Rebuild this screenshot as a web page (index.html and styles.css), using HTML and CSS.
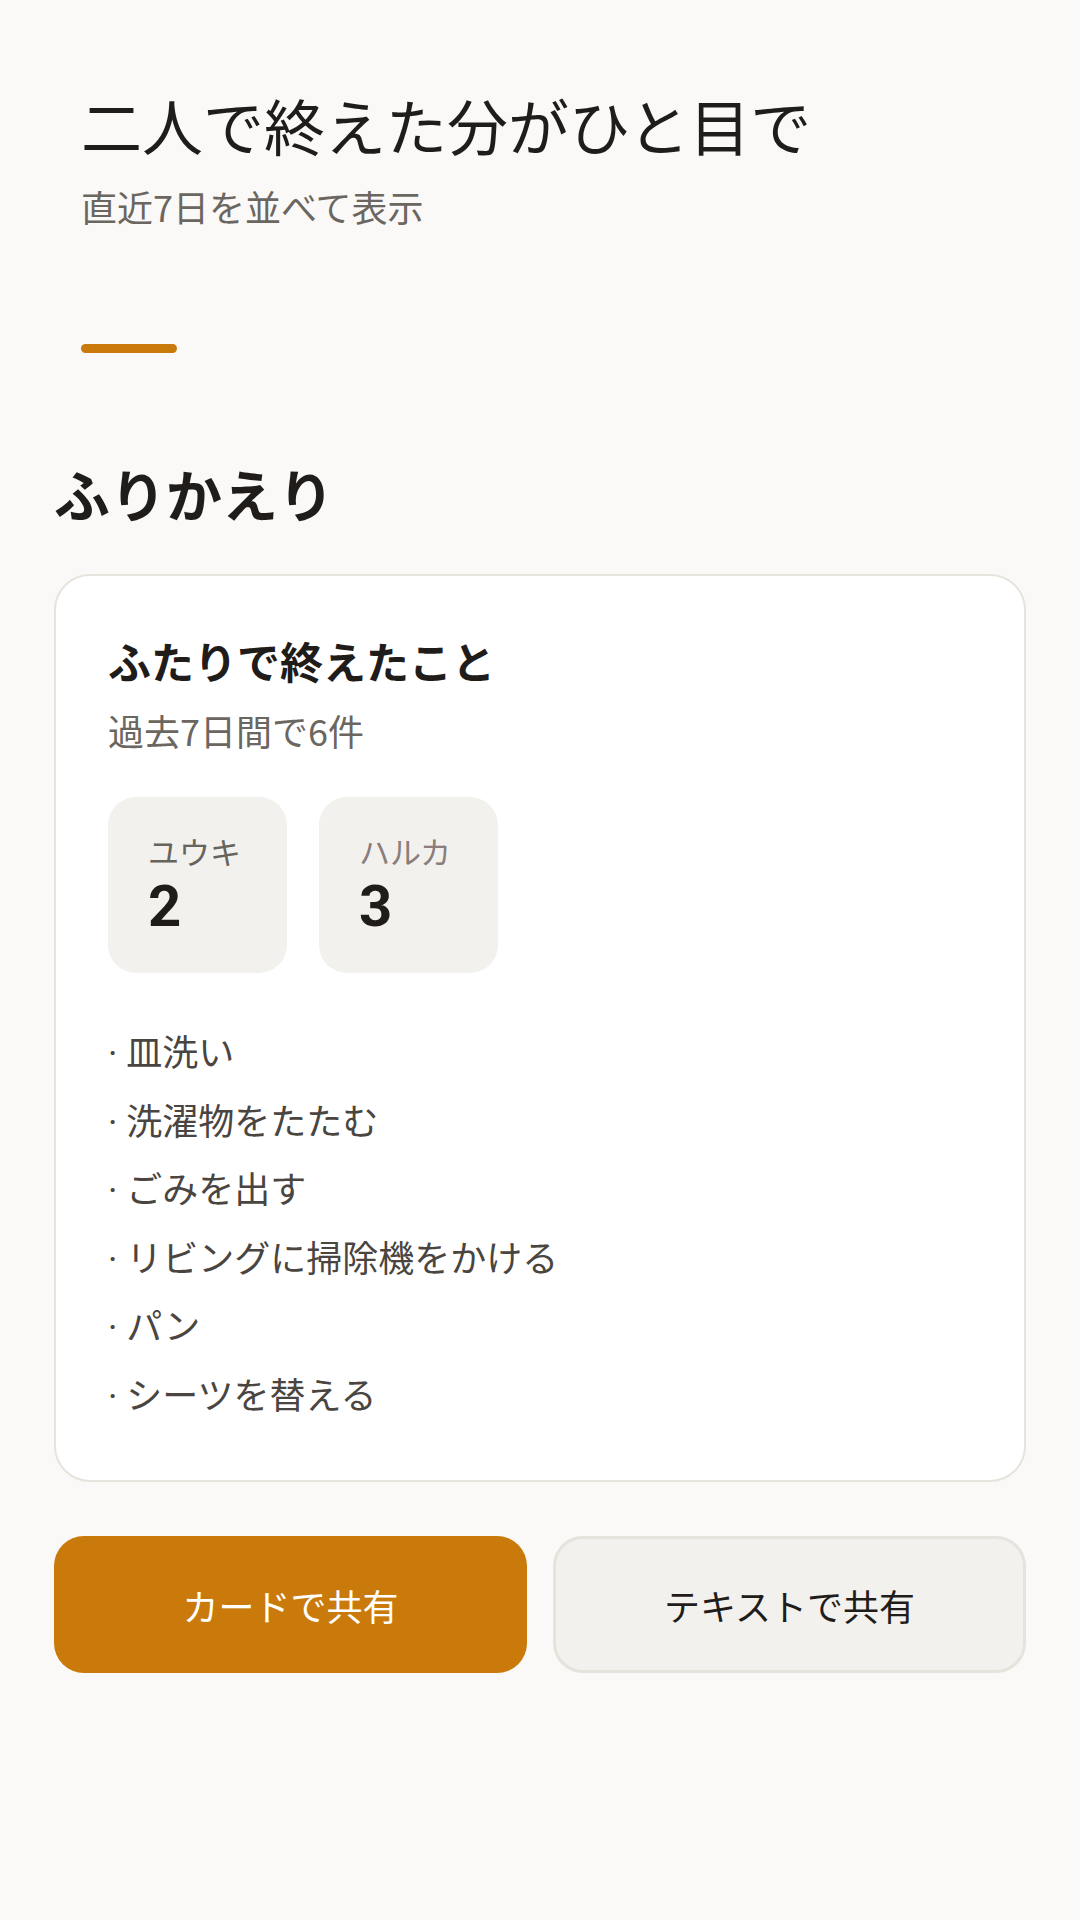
FILE: index.html
```html
<!DOCTYPE html>
<html lang="ja">
<head>
<meta charset="utf-8">
<title>ふりかえり</title>
<link rel="stylesheet" href="styles.css">
</head>
<body>
<main class="page">
  <header class="hero">
    <h1 class="hero-title">二人で終えた分がひと目で</h1>
    <p class="hero-sub">直近7日を並べて表示</p>
    <div class="accent-bar"></div>
  </header>

  <h2 class="section-title">ふりかえり</h2>

  <section class="card">
    <h3 class="card-title">ふたりで終えたこと</h3>
    <p class="card-sub">過去7日間で6件</p>
    <div class="stats">
      <div class="stat">
        <div class="stat-name stat-name--yuki">ユウキ</div>
        <div class="stat-count">2</div>
      </div>
      <div class="stat">
        <div class="stat-name stat-name--haruka">ハルカ</div>
        <div class="stat-count">3</div>
      </div>
    </div>
    <ul class="done-list">
      <li><span class="dot">· </span>皿洗い</li>
      <li><span class="dot">· </span>洗濯物をたたむ</li>
      <li><span class="dot">· </span>ごみを出す</li>
      <li><span class="dot">· </span>リビングに掃除機をかける</li>
      <li><span class="dot">· </span>パン</li>
      <li><span class="dot">· </span>シーツを替える</li>
    </ul>
  </section>

  <div class="actions">
    <button class="btn btn--primary">カードで共有</button>
    <button class="btn btn--secondary">テキストで共有</button>
  </div>
</main>
</body>
</html>
```

FILE: styles.css
```css
* {
  box-sizing: border-box;
}

html, body {
  margin: 0;
  padding: 0;
}

body {
  background: #faf9f7;
  font-family: "Noto Sans CJK JP", "Noto Sans", sans-serif;
  color: #1f1c19;
  width: 1080px;
  min-height: 1920px;
}

.page {
  padding: 0 54px;
}

.hero {
  padding: 86px 27px 0;
}

.hero-title {
  margin: 0;
  font-size: 61px;
  line-height: 78px;
  font-weight: 400;
  color: #1f1c19;
}

.hero-sub {
  margin: 17px 0 0;
  font-size: 36px;
  line-height: 50px;
  color: #6b665f;
}

.accent-bar {
  margin-top: 113px;
  width: 96px;
  height: 9px;
  border-radius: 5px;
  background: #c97a0a;
}

.section-title {
  margin: 105px 0 0;
  font-size: 56px;
  line-height: 70px;
  font-weight: 700;
  color: #1f1c19;
}

.card {
  margin-top: 46px;
  background: #ffffff;
  border: 2px solid #e6e3dd;
  border-radius: 36px;
  padding: 52px 52px 53px;
}

.card-title {
  margin: 0;
  font-size: 43px;
  line-height: 64px;
  font-weight: 700;
  color: #1f1c19;
}

.card-sub {
  margin: 13px 0 0;
  font-size: 36px;
  line-height: 50px;
  color: #6b665f;
}

.stats {
  margin-top: 42px;
  display: flex;
  gap: 32px;
}

.stat {
  width: 179px;
  height: 176px;
  background: #f2f1ee;
  border-radius: 28px;
  padding: 33px 40px 0;
}

.stat-name {
  font-size: 31px;
  line-height: 42px;
}

.stat-name--yuki {
  color: #66645c;
}

.stat-name--haruka {
  color: #8a7d7a;
}

.stat-count {
  margin-top: 1px;
  font-family: Roboto, "Liberation Sans", sans-serif;
  font-size: 58px;
  line-height: 66px;
  font-weight: 700;
  color: #1f1c19;
}

.done-list {
  list-style: none;
  margin: 43px 0 0;
  padding: 0;
}

.done-list li {
  height: 68.5px;
  font-size: 36px;
  line-height: 68.5px;
  color: #4a4540;
}

.dot {
  font-family: Roboto, "Liberation Sans", sans-serif;
  line-height: 0;
  white-space: pre;
}

.actions {
  margin-top: 54px;
  display: grid;
  grid-template-columns: 1fr 1fr;
  gap: 26px;
}

.btn {
  height: 137px;
  border-radius: 30px;
  font-family: "Noto Sans CJK JP", "Noto Sans", sans-serif;
  font-size: 36px;
  font-weight: 400;
  cursor: pointer;
}

.btn--primary {
  background: #c97a0a;
  border: none;
  color: #ffffff;
}

.btn--secondary {
  background: #f2f1ee;
  border: 3px solid #e6e3dd;
  color: #1f1c19;
}
```
